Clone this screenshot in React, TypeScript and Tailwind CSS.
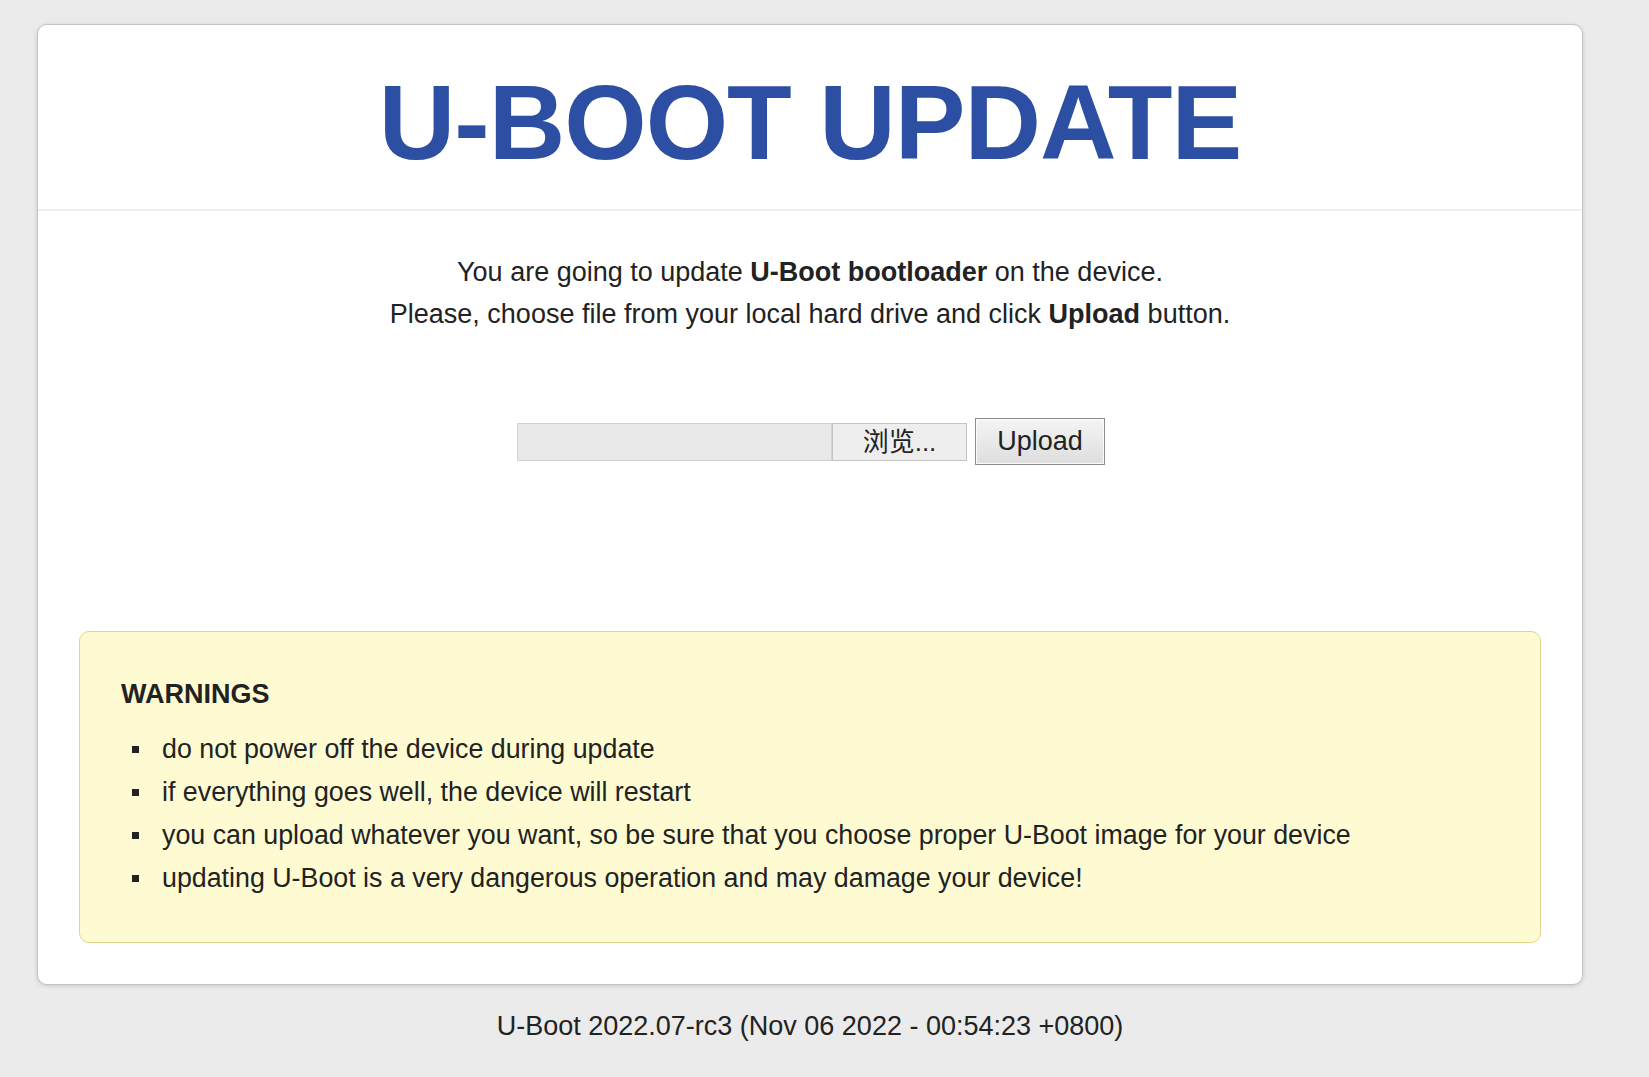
import React from 'react';

const warnings = [
    'do not power off the device during update',
    'if everything goes well, the device will restart',
    'you can upload whatever you want, so be sure that you choose proper U-Boot image for your device',
    'updating U-Boot is a very dangerous operation and may damage your device!',
];

const App = () => {
    return (
        <div className="min-h-screen bg-[#ebebeb] pt-[24px] text-[#222] font-['Liberation_Sans','Noto_Sans_CJK_SC',Arial,sans-serif]">
            <div className="ml-[37px] w-[1546px]">
                <div className="rounded-[10px] border border-[#c4c4c4] bg-white shadow-[0_1px_4px_rgba(0,0,0,0.15)]">
                    <div className="flex h-[186px] items-center justify-center border-b-2 border-[#eeeeee] pt-[10px]">
                        <h1 className="text-[106px] font-bold leading-none text-[#2d4fa3] tracking-[-1px]">U-BOOT UPDATE</h1>
                    </div>

                    <div className="px-[41px] pb-[41px]">
                        <div className="pt-[40px] text-center text-[27px] leading-[42px]">
                            <p>You are going to update <b>U-Boot bootloader</b> on the device.</p>
                            <p>Please, choose file from your local hard drive and click <b>Upload</b> button.</p>
                        </div>

                        <form className="mt-[83px] flex items-center justify-center gap-[8px]" onSubmit={e => e.preventDefault()}>
                            <div className="flex h-[38px] ml-[2px]">
                                <div className="w-[315px] border border-[#d2d2d2] bg-[#e8e8e8]" />
                                <button type="button" className="w-[135px] border border-[#c4c4c4] bg-[#eeeeee] text-[26px] leading-none text-[#222]">
                                    浏览...
                                </button>
                            </div>
                            <button type="submit" className="h-[47px] w-[130px] border border-[#8c8c8c] bg-gradient-to-b from-[#f4f4f4] to-[#dedede] text-[27px] leading-none text-[#222] shadow-[inset_0_0_0_1px_#fafafa]">
                                Upload
                            </button>
                        </form>

                        <div className="mt-[166px] rounded-[10px] border border-[#e3d68a] bg-[#fefbd2] px-[41px] pt-[49px] pb-[42px]">
                            <h2 className="text-[27px] font-bold leading-none">WARNINGS</h2>
                            <ul className="mt-[20px] text-[26.8px] leading-[43px]">
                                {warnings.map(w => (
                                    <li key={w} className="flex items-center">
                                        <span className="ml-[11px] mr-[23px] h-[7px] w-[7px] bg-[#222]" />
                                        {w}
                                    </li>
                                ))}
                            </ul>
                        </div>
                    </div>
                </div>

                <p className="mt-[28px] text-center text-[27px] leading-none">U-Boot 2022.07-rc3 (Nov 06 2022 - 00:54:23 +0800)</p>
            </div>
        </div>
    );
};

export default App;
